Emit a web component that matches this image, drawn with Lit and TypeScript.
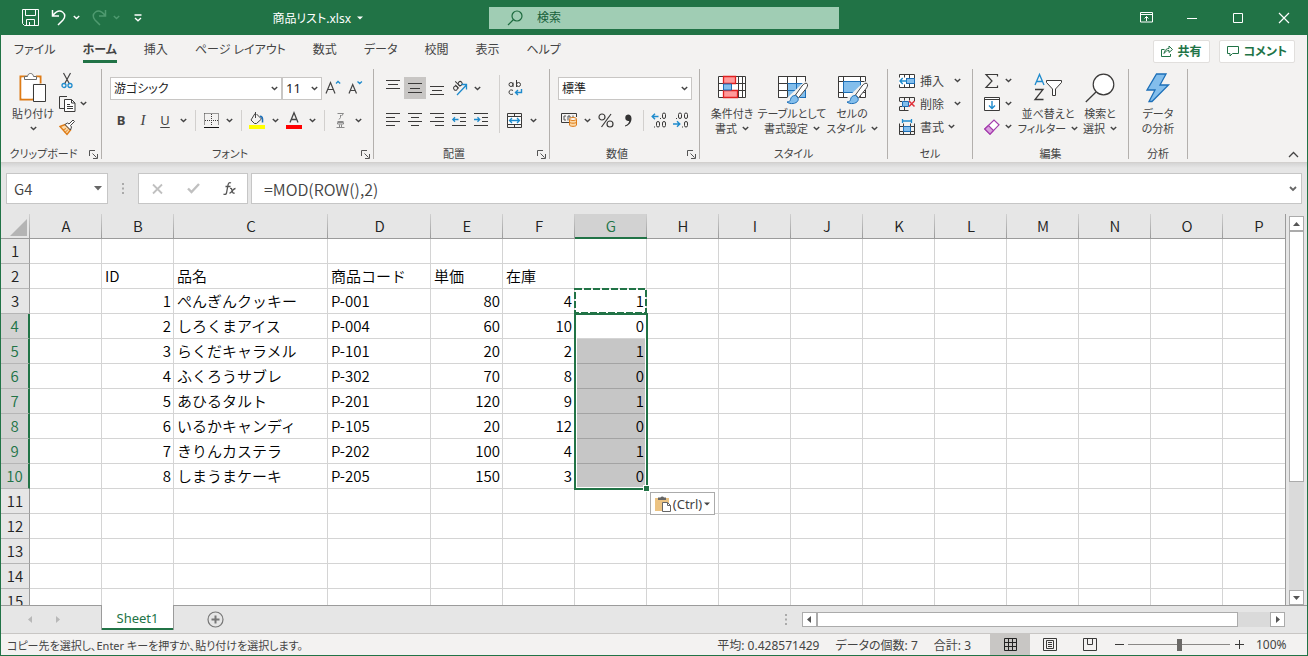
import { LitElement, html, css, svg, nothing, TemplateResult } from "lit";
import { customElement, state } from "lit/decorators.js";
import { classMap } from "lit/directives/class-map.js";

const GREEN = "#217346";
const INK = "#3b3a39";
const BLUE = "#1e8bcd";
const PALE = "#83beec";

const icon = (w: number, h: number, body: unknown) =>
  html`<svg width=${w} height=${h} viewBox="0 0 ${w} ${h}" fill="none" stroke=${INK} aria-hidden="true">${body}</svg>`;

const chevron = html`<svg class="chev" width="7" height="5" viewBox="0 0 7 5" fill="none" stroke="#444" stroke-width="1.4" aria-hidden="true"><path d="M.8 1 3.5 3.6 6.2 1"/></svg>`;

const brush = svg`<path d="M33 8.500c-1-1-3.500.5-5 2.500l-6.500 9 3 2.800 7-8.500c1.800-2 2.800-4.500 1.500-5.800z" fill="#fff" stroke="#444"/>
  <path d="M21.500 20.500c-3-.2-4.500 1.500-5 4-.4 1.600-1.500 2.500-3.500 2.500 3 2.500 9.500 2 11-1.500.6-1.500.3-3-2.500-5z" fill="${PALE}" stroke="#1c6fb8"/>`;

const icons: Record<string, TemplateResult> = {
  save: html`<svg width="17" height="17" viewBox="0 0 17 17" fill="none" stroke="#fff" aria-hidden="true"><path d="M.5.5h16v16H2.500L.5 14.500zM3.500.5v6h10v-6M4.500 16.500v-6h8v6M7.500 16v-3"/></svg>`,
  undo: html`<svg width="16" height="17" viewBox="0 0 16 17" fill="none" stroke="#fff" stroke-width="1.500" aria-hidden="true"><path d="M1.500 1v6h6.500M1.700 6.800C5 2.500 8.500 1 11.500 3c3 2.200 2.800 5.500.5 8l-5 5"/></svg>`,
  redo: html`<svg width="16" height="17" viewBox="0 0 16 17" fill="none" stroke="#4f9a70" stroke-width="1.500" aria-hidden="true"><path d="M14.500 1v6H8M14.300 6.800C11 2.500 7.500 1 4.500 3c-3 2.200-2.800 5.500-.5 8l5 5"/></svg>`,
  more: html`<svg width="8" height="8" viewBox="0 0 8 8" fill="none" stroke="#fff" stroke-width="1.300" aria-hidden="true"><path d="M.5 1h7M1 4l3 2.800L7 4"/></svg>`,
  search: html`<svg width="16" height="16" viewBox="0 0 16 16" fill="none" stroke="#1d6a3f" stroke-width="1.200" aria-hidden="true"><circle cx="10" cy="6" r="5"/><path d="M6.500 9.500 1 15"/></svg>`,
  ribbonMode: html`<svg width="13" height="11" viewBox="0 0 13 11" fill="none" stroke="#fff" aria-hidden="true"><path d="M.5.5h12v9.500H.5zM.5 2.500h12M6.500 9V4.500M4.500 6.500l2-2 2 2"/></svg>`,
  min: html`<svg width="10" height="10" viewBox="0 0 10 10" stroke="#fff" aria-hidden="true"><path d="M0 5.500h10"/></svg>`,
  max: html`<svg width="10" height="10" viewBox="0 0 10 10" fill="none" stroke="#fff" aria-hidden="true"><path d="M.5.5h9v9h-9z"/></svg>`,
  close: html`<svg width="10" height="10" viewBox="0 0 10 10" stroke="#fff" stroke-width="1.200" aria-hidden="true"><path d="M0 0l10 10M10 0 0 10"/></svg>`,
  share: html`<svg width="12" height="12" viewBox="0 0 12 12" fill="none" stroke=${GREEN} aria-hidden="true"><path d="M3.500 4.500h-3v7h9V9M3 8.500C3.500 5 5.500 3.500 8 3.500V1l3.500 3.500L8 7.500V5.500C6 5.500 4.500 6.200 3 8.500z"/></svg>`,
  comment: html`<svg width="12" height="12" viewBox="0 0 12 12" fill="none" stroke=${GREEN} aria-hidden="true"><path d="M.5 1.500h11v7H5.500L3 11V8.500H.5z"/></svg>`,

  paste: icon(28, 31, svg`<path d="M8 4.500H1.500v23h13M17 4.500h4.500v7" stroke="#de7b16" stroke-width="2"/><path d="M2.500 5.500h18v6h-7v15h-11z" fill="#fff" stroke="none"/>
    <path d="M5.500 7.500v-3h3c.3-2 1.300-3 3-3s2.700 1 3 3h3v3z" fill="#fff" stroke="#6b6b6b"/><path d="M14.500 12.500h12v17h-12z" fill="#fff"/>`),
  cut: icon(12, 17, svg`<path d="M2.500 1 8.500 12M9.500 1 3.500 12" stroke="#444" stroke-width="1.200"/><circle cx="3" cy="13.500" r="2" stroke="${BLUE}" stroke-width="1.300"/><circle cx="9" cy="13.500" r="2" stroke="${BLUE}" stroke-width="1.300"/>`),
  copy: icon(17, 16, svg`<path d="M5 12.500H.5V.5h7.500"/><path d="M5.500 3.500h7l3.500 3.500v8.500H5.500z" fill="#fff"/><path d="M12.500 3.500v3.500H16M8 8.500h3M8 10.500h6M8 12.500h6"/>`),
  painter: icon(16, 16, svg`<path d="M1 7.500 6 5.500l5.500 5.500L8 15.500z" fill="#fbd9a8" stroke="#de7b16" stroke-width="1.400"/><path d="M4 11l3-1.500M6 13.500l3-3" stroke="#de7b16"/><path d="M6 5.500 8.500 4l1.500 1 4-4 1.500 1.500-4 4 1 1.500-1 3z" fill="#fff" stroke="#444"/>`),
  grow: icon(16, 16, svg`<path d="M1 13.500 5.500 2.500 10 13.500M2.700 9.500h5.600" stroke="#444" stroke-width="1.200"/><path d="M11 3.500 13 1.500l2.200 2" stroke="${BLUE}" stroke-width="1.300"/>`),
  shrink: icon(15, 16, svg`<path d="M1 13.500 4.700 4.500 8.500 13.500M2.500 10.500h4.500" stroke="#444" stroke-width="1.200"/><path d="M9.500 1.500l2.200 2 2.200-2" stroke="${BLUE}" stroke-width="1.300"/>`),
  borders: icon(15, 15, svg`<path d="M.5.5h14v12M.5.5v12M7.500 1v12M1 7.500h13" stroke-dasharray="1 1"/><path d="M0 14.500h15" stroke="#111"/>`),
  fill: icon(16, 17, svg`<path d="M6 1.500 2 8l3.500 3.500h2l5-4.500L7.500 2M6.500 0v6" stroke="#444"/><path d="M11 4.500c2-.5 3 1.500 2.500 6" stroke="#1c6fb8" stroke-width="1.600"/><path d="M0 13h16v4H0z" fill="#ff0" stroke="none"/>`),
  fontColor: icon(16, 17, svg`<path d="M4 10.500 8 .8l4 9.700M5.500 7.500h5" stroke="#444" stroke-width="1.300"/><path d="M0 13h16v4H0z" fill="#f00" stroke="none"/>`),
  ruby: icon(9, 17, svg`<path d="M1.500 1.500h6L5.500 4M4.500 3v2.500L3 7.500" stroke="#8a8a8a"/><path d="M1.500 9.500h6M1.500 12h6v-1.500h-6zM3.500 12.500v2.500M5.500 12.500v2.500M.5 15.500h8" stroke="#8a8a8a"/>`),

  top: icon(14, 16, svg`<path d="M0 .5h14M2 4.500h10M0 8.500h14"/>`),
  middle: icon(14, 14, svg`<path d="M0 2.500h14M2 7.500h10M0 11.500h14"/>`),
  bottom: icon(14, 16, svg`<path d="M0 6.500h14M2 10.500h10M0 14.500h14"/>`),
  left: icon(14, 14, svg`<path d="M0 .5h14M0 4.500h9M0 8.500h14M0 12.500h9"/>`),
  center: icon(14, 14, svg`<path d="M0 .5h14M3 4.500h8M0 8.500h14M3 12.500h8"/>`),
  right: icon(14, 14, svg`<path d="M0 .5h14M5 4.500h9M0 8.500h14M5 12.500h9"/>`),
  outdent: icon(15, 14, svg`<path d="M0 .5h14M8 4.500h6M8 8.500h6M0 12.500h14"/><path d="M1 6.500h5.500M3 4.300.8 6.500 3 8.700" stroke="${BLUE}" stroke-width="1.300"/>`),
  indent: icon(15, 14, svg`<path d="M0 .5h14M8 4.500h6M8 8.500h6M0 12.500h14"/><path d="M0 6.500h5.500M3.500 4.300l2.200 2.200-2.200 2.200" stroke="${BLUE}" stroke-width="1.300"/>`),
  orient: icon(17, 16, svg`<g transform="rotate(-45 6 6)"><circle cx="3.500" cy="6.500" r="2"/><path d="M5.500 4v5M8 1.500v7"/><circle cx="10" cy="6.500" r="2"/></g><path d="M6 15 15.500 5M10.500 4.500h5v5" stroke="${BLUE}" stroke-width="1.300"/>`),
  wrap: icon(15, 16, svg`<circle cx="3" cy="4.500" r="2"/><path d="M5 2.500v4.500M8.500 0v7"/><circle cx="10.500" cy="4.500" r="2"/><path d="M5 10.500c-1.500-1.200-4-.5-4 1.700S3.500 15 5 14"/><path d="M13.500 9v3.500H7.500M10 10l-2.500 2.500L10 15" stroke="${BLUE}" stroke-width="1.400"/>`),
  merge: icon(16, 15, svg`<path d="M.5.5h14v14H.5zM7.500.5v3M7.500 11.500v3" /><path d="M.5 3.500h14v8H.5z" fill="#fff"/><path d="M2.500 7.500h10M5 5 2.500 7.500 5 10M10 5l2.500 2.500L10 10" stroke="${BLUE}" stroke-width="1.300"/>`),
  currency: icon(17, 14, svg`<path d="M8 9.500H.5v-9h15v3.500"/><path d="M5 3H3v4h2M7 7.500V3h2v2M12 2.500v2" stroke="#555"/><path d="M8.500 6v6c0 1.800 7 1.800 7 0V6" fill="#fbd9a8" stroke="#de7b16"/><ellipse cx="12" cy="6" rx="3.500" ry="1.500" fill="#fff" stroke="#de7b16"/><path d="M8.500 9c0 1.600 7 1.600 7 0" stroke="#de7b16"/>`),
  percent: icon(16, 15, svg`<circle cx="4" cy="4" r="3" stroke-width="1.200"/><circle cx="12" cy="11" r="3" stroke-width="1.200"/><path d="M13 1 3.500 14" stroke-width="1.200"/>`),
  comma: icon(8, 13, svg`<path d="M4 .5a3.300 3.300 0 0 0 0 6.500c.8 0 1-.1 1.300-.3C5 9 3.500 10.500 1 11.500v1C5 11.500 7.500 8.500 7.500 4.500 7.500 2 6 .5 4 .5z" fill="#333" stroke="none"/>`),
  incDec: icon(16, 16, svg`<path d="M1 4.500h6.500M4 1.800 1.200 4.500 4 7.200" stroke="${BLUE}" stroke-width="1.400"/><rect x="11.500" y="1" width="3" height="5.500" rx="1.500"/><rect x="5.500" y="9.500" width="3" height="5.500" rx="1.500"/><rect x="11.500" y="9.500" width="3" height="5.500" rx="1.500"/><path d="M9 6.500h1M3 15h1"/>`),
  decDec: icon(16, 16, svg`<path d="M0 12h6.500M4 9.300l2.800 2.700L4 14.700" stroke="${BLUE}" stroke-width="1.400"/><rect x="5.500" y="1" width="3" height="5.500" rx="1.500"/><rect x="11.500" y="1" width="3" height="5.500" rx="1.500"/><rect x="11.500" y="9.500" width="3" height="5.500" rx="1.500"/><path d="M3 6.500h1M9 15h1"/>`),

  cond: icon(29, 23, svg`<path d="M.5.5h27v21H.5z" fill="#fff"/><path d="M.5 7.500h27M.5 14.500h27M20.500.5v21M24.500.5v21"/><path d="M5.500.5h12v7h-12zM5.500 14.500h14v7h-14z" fill="#ff9a9a" stroke="#e02020" stroke-width="1.300"/><path d="M5.500 8h8v6h-8z" fill="${PALE}" stroke="#1c6fb8"/>`),
  tableFmt: icon(29, 23, svg`<path d="M.5.5h27v21H.5z" fill="#fff"/><path d="M9.500 7.500h18v14h-18z" fill="${PALE}" stroke="none"/><path d="M.5 7.500h27M.5 14.500h27M9.500.5v21M18.500.5v21M.5.5h27v21H.5z"/><path d="M9.500 7.500h18v14h-18M9.500 14.500h18M18.500 7.500v14" stroke="#1c6fb8"/><path d="M27 5 9 22l3 5h5L31 9z" fill="#f3f2f1" stroke="none"/><g transform="translate(-4 -1)">${brush}</g>`),
  cellStyle: icon(29, 23, svg`<path d="M.5.5h27v21H.5z" fill="#fff"/><path d="M.5 5.500h27M.5 16.500h27M5.500.5v21M22.500.5v21"/><path d="M5.500 5.500h17v11h-17z" fill="${PALE}" stroke="#1c6fb8"/><path d="M27 5 9 22l3 5h5L31 9z" fill="#f3f2f1" stroke="none"/><g transform="translate(-4 -1)">${brush}</g>`),
  insert: icon(16, 14, svg`<path d="M.5.5h15v13H.5z" fill="#fff"/><path d="M.5 4.500h15M.5 9.500h15M5.500.5v13M10.500.5v13"/><path d="M7.500 4.500h8v5h-8z" fill="${PALE}" stroke="#1c6fb8"/><path d="M0 3.500h7v7H0z" fill="#fff" stroke="none"/><path d="M1 7h7M3.700 4 1 7l2.700 3" stroke="${BLUE}" stroke-width="1.400"/>`),
  remove: icon(16, 14, svg`<path d="M.5 4V.5h15V4M.5 10v3.500h9M.5 4.500H3M.5 9.500H3M5.500.5v3M10.500.5v3M5.500 10v3.500"/><path d="M3.500 4.500h6v5h-6z" fill="${PALE}" stroke="#1c6fb8"/><path d="M10 4l5.500 5.500M15.500 4 10 9.500" stroke="#e0303a" stroke-width="1.500"/>`),
  format: icon(16, 16, svg`<path d="M.5 4.500v11h15v-11M.5 7.500h15M.5 12.500h15M4.500 4.500v11M11.500 4.500v11"/><path d="M4.500 7.500h7v5h-7z" fill="${PALE}" stroke="#1c6fb8"/><path d="M3.500 0v4M12.500 0v4M4 2h8" stroke="${BLUE}" stroke-width="1.300"/>`),
  sum: icon(14, 16, svg`<path d="M12.500 3.500v-2H1L7 8 1 14.500h11.500v-2" stroke-width="1.200"/>`),
  fillDown: icon(16, 14, svg`<path d="M.5.5h15v13H.5z" fill="#fff"/><path d="M.5 2.500h15"/><path d="M8 4v7.500M5 8.500l3 3 3-3" stroke="${BLUE}" stroke-width="1.400"/>`),
  clear: icon(16, 16, svg`<path d="M.8 10 10 1l5 4.800L6 15.200z" fill="#fff" stroke="#a43cad" stroke-width="1.200"/><path d="M.8 10 4.500 6.500l5 5L6 15.200z" fill="#d9a0dd" stroke="#a43cad" stroke-width="1.200"/>`),
  sort: icon(29, 29, svg`<path d="M1 12 5.500 1.500 10 12M2.500 8.500h6" stroke="${BLUE}" stroke-width="1.300"/><path d="M1 16.500h8L1 26.500h8.500" stroke-width="1.300"/><path d="M12.500 7.500h15v2l-6 6.500v6.500h-3V16l-6-6.500z" fill="#fff"/>`),
  find: icon(31, 30, svg`<circle cx="18.500" cy="11.500" r="10.300" fill="#fff" stroke-width="1.200"/><path d="M11 19 .8 29" stroke-width="1.300"/>`),
  bolt: icon(24, 30, svg`<path d="M10.500 1h9.500l-6 11h8.500L6 28.500h-3L9 17H1z" fill="${PALE}" stroke="#1c6fb8" stroke-width="1.300"/>`),
  launcher: icon(9, 9, svg`<path d="M.5 6V.5H6M3.500 3.500l4 4M8.500 4v4.500H4" stroke="#555"/>`),
};

interface Row { id: number; name: string; code: string; price: number; stock: number; flag: number }

const ROWS: Row[] = [
  { id: 1, name: "ぺんぎんクッキー", code: "P-001", price: 80, stock: 4, flag: 1 },
  { id: 2, name: "しろくまアイス", code: "P-004", price: 60, stock: 10, flag: 0 },
  { id: 3, name: "らくだキャラメル", code: "P-101", price: 20, stock: 2, flag: 1 },
  { id: 4, name: "ふくろうサブレ", code: "P-302", price: 70, stock: 8, flag: 0 },
  { id: 5, name: "あひるタルト", code: "P-201", price: 120, stock: 9, flag: 1 },
  { id: 6, name: "いるかキャンディ", code: "P-105", price: 20, stock: 12, flag: 0 },
  { id: 7, name: "きりんカステラ", code: "P-202", price: 100, stock: 4, flag: 1 },
  { id: 8, name: "しまうまケーキ", code: "P-205", price: 150, stock: 3, flag: 0 },
];

const COLUMNS = [..."ABCDEFGHIJKLMNOP"];

const controls = css`
  :host, * { box-sizing: border-box; }
  svg { display: block; flex: none; overflow: visible; }
  button, input, select {
    font: inherit; color: inherit; background: none; border: 0; padding: 0; margin: 0;
    border-radius: 0; appearance: none; outline: none; min-width: 0;
  }
  button { display: flex; align-items: center; justify-content: center; white-space: nowrap; }
`;

@customElement("title-bar")
class TitleBar extends LitElement {
  static styles = [controls, css`
    :host { display: grid; grid-template-columns: 488px minmax(160px, 350px) 1fr; align-items: center; height: 35px; background: #217346; color: #fff; font-feature-settings: "palt"; }
    .left, .window { display: flex; align-items: center; }
    .left { padding-left: 21px; }
    .left .chev { stroke: #fff; }
    .dim .chev { stroke: #4f9a70; }
    .tool { gap: 6px; height: 28px; }
    .undo { margin-left: 12px; }
    .redo { margin-left: 11px; }
    .more { margin-left: 14px; }
    .file { margin-left: auto; padding-right: 126px; gap: 6px; font-size: 12px; }
    .search { display: flex; align-items: center; height: 22px; gap: 14px; padding-left: 18px; background: #a0cdb4; color: #17603a; }
    .search input { flex: 1; font-size: 12px; }
    .search input::placeholder { color: #17603a; opacity: 1; }
    .window { justify-content: flex-end; }
    .window button { width: 46px; height: 35px; }
  `];
  render() {
    return html`
      <div class="left">
        <button class="tool" aria-label="上書き保存">${icons.save}</button>
        <button class="tool undo" aria-label="元に戻す">${icons.undo}${chevron}</button>
        <button class="tool redo dim" aria-label="やり直し">${icons.redo}${chevron}</button>
        <button class="tool more" aria-label="クイック アクセス">${icons.more}</button>
        <button class="file">商品リスト.xlsx <svg width="6" height="4" viewBox="0 0 6 4" fill="#fff"><path d="M0 .5h6L3 3.500z"/></svg></button>
      </div>
      <label class="search">${icons.search}<input type="text" placeholder="検索" aria-label="検索"></label>
      <div class="window">
        <button aria-label="リボンの表示オプション">${icons.ribbonMode}</button>
        <button aria-label="最小化">${icons.min}</button>
        <button aria-label="最大化">${icons.max}</button>
        <button aria-label="閉じる">${icons.close}</button>
      </div>`;
  }
}

@customElement("excel-ribbon")
class ExcelRibbon extends LitElement {
  static styles = [controls, css`
    :host { display: block; background: #f3f2f1; color: #444; border-bottom: 1px solid #d2d0ce; font-feature-settings: "palt"; }
    .tabs { display: flex; align-items: center; height: 34px; padding: 0 6px 2px 13px; gap: 27px; }
    .tab { color: #444; text-decoration: none; font-size: 12px; line-height: 22px; height: 24px; white-space: nowrap; }
    .tab.on { font-weight: 700; border-bottom: 3px solid #217346; }
    .actions { display: flex; gap: 9px; margin-left: auto; padding-right: 6px; }
    .actions button { gap: 5px; height: 23px; padding: 0 7px; background: #fff; border: 1px solid #e1dfdd; border-radius: 2px; color: #217346; font-weight: 700; font-size: 12px; }
    .groups { display: flex; height: 93px; }
    .group { display: flex; flex-direction: column; flex: none; height: 90px; border-right: 1px solid #b3b0ad; }
    .clip { width: 101px; } .font { width: 272px; } .align { width: 176px; } .num { width: 150px; }
    .style { width: 188px; } .cells { width: 85px; } .edit { width: 156px; } .data { width: 59px; }
    .body { display: flex; flex: 1; }
    .caption { display: flex; justify-content: center; align-items: center; height: 18px; margin-bottom: -4px; font-size: 11px; line-height: 18px; }
    .caption span { flex: 1; text-align: center; }
    .caption button { width: 15px; height: 15px; }
    .rows { display: flex; flex-direction: column; gap: 10px; padding: 8px 0 0 8px; }
    .row { display: flex; align-items: center; height: 22px; }
    .t { height: 22px; width: 22px; font-size: 13px; }
    .drop { width: 15px; height: 22px; }
    .active { background: #c8c6c4; }
    .bar { width: 1px; height: 21px; background: #d2d0ce; margin: 0 4px; }
    .tall { width: 1px; height: 58px; background: #d2d0ce; margin: 6px 0 0 7px; }
    .merge { padding-left: 4px; }
    .combo { display: grid; align-items: center; background: #fff; border: 1px solid #c8c6c4; height: 23px; color: #222; font-size: 12px; }
    .combo select, .combo .chev { grid-area: 1 / 1; }
    .combo select { height: 21px; padding-left: 3px; width: 100%; font-feature-settings: "palt"; }
    .combo .chev { justify-self: end; margin-right: 3px; pointer-events: none; }
    .w-font { width: 172px; } .w-size { width: 40px; font-size: 13px; } .w-num { width: 134px; }
    .big { flex-direction: column; justify-content: flex-start; height: 68px; font-size: 11px; line-height: 15px; width: 60px; }
    .big .pic { display: flex; align-items: center; justify-content: center; height: 37px; }
    .big .line { display: flex; align-items: center; gap: 5px; height: 15px; }
    .small { display: flex; flex-direction: column; }
    .small button { height: 23px; justify-content: flex-start; font-size: 12px; gap: 4px; }
    .small .pic { display: flex; width: 18px; justify-content: center; }
    .cells .small { padding-left: 10px; }
    .wide .chev { margin-left: 6px; }
    .clip .big { width: 48px; margin-left: 8px; }
    .clip .small { margin-left: 1px; }
    .style .body { padding-left: 2px; }
    .edit .small { padding: 0 0 0 10px; width: 47px; }
    .edit .sortbtn { width: 56px; } .edit .findbtn { width: 48px; }
    .b { font-weight: 700; } .i { font-style: italic; font-family: "Liberation Serif", serif; font-size: 15px; } .u { text-decoration: underline; text-underline-offset: 2px; }
    .collapse { margin: auto 7px 3px auto; width: 14px; height: 10px; }
  `];

  private tool(name: string, label: string, cls = "") {
    return html`<button class="t ${cls}" aria-label=${label}>${icons[name]}</button>`;
  }
  private drop(label: string) {
    return html`<button class="drop" aria-label="${label} オプション">${chevron}</button>`;
  }
  private big(name: string, lines: string[], arrow: boolean, cls = "") {
    return html`<button class="big ${cls}"><span class="pic">${icons[name]}</span>
      ${lines.map((l, i) => html`<span class="line">${l}${arrow && i === lines.length - 1 ? chevron : nothing}</span>`)}</button>`;
  }
  private small(name: string, label: string, text: string, arrow: boolean, cls = "") {
    return html`<button class=${cls} aria-label=${label}><span class="pic">${icons[name]}</span>${text}${arrow ? chevron : nothing}</button>`;
  }
  private caption(text: string, launcher = false) {
    return html`<div class="caption"><span>${text}</span>${launcher ? html`<button aria-label="${text}の設定">${icons.launcher}</button>` : nothing}</div>`;
  }

  render() {
    const tabs = ["ファイル", "ホーム", "挿入", "ページ レイアウト", "数式", "データ", "校閲", "表示", "ヘルプ"];
    return html`
      <nav class="tabs">
        ${tabs.map((t) => html`<a href="#" class=${classMap({ tab: true, on: t === "ホーム" })}>${t}</a>`)}
        <div class="actions">
          <button>${icons.share}共有</button>
          <button>${icons.comment}コメント</button>
        </div>
      </nav>
      <div class="groups">
        <section class="group clip">
          <div class="body">
            ${this.big("paste", ["貼り付け", ""], true)}
            <div class="small">
              ${this.small("cut", "切り取り", "", false)}
              ${this.small("copy", "コピー", "", true)}
              ${this.small("painter", "書式のコピー", "", false)}
            </div>
          </div>
          ${this.caption("クリップボード", true)}
        </section>
        <section class="group font">
          <div class="body"><div class="rows">
            <div class="row">
              <label class="combo w-font"><select aria-label="フォント"><option>游ゴシック</option></select>${chevron}</label>
              <label class="combo w-size"><select aria-label="フォント サイズ"><option>11</option></select>${chevron}</label>
              ${this.tool("grow", "拡大")}${this.tool("shrink", "縮小")}
            </div>
            <div class="row">
              <button class="t b">B</button><button class="t i">I</button><button class="t u">U</button>${this.drop("下線")}
              <span class="bar"></span>${this.tool("borders", "罫線")}${this.drop("罫線")}
              <span class="bar"></span>${this.tool("fill", "塗りつぶし")}${this.drop("塗りつぶし")}${this.tool("fontColor", "文字色")}${this.drop("文字色")}
              <span class="bar"></span>${this.tool("ruby", "ふりがな")}${this.drop("ふりがな")}
            </div>
          </div></div>
          ${this.caption("フォント", true)}
        </section>
        <section class="group align">
          <div class="body">
            <div class="rows">
              <div class="row">${this.tool("top", "上揃え")}${this.tool("middle", "上下中央", "active")}${this.tool("bottom", "下揃え")}${this.tool("orient", "方向")}${this.drop("方向")}</div>
              <div class="row">${this.tool("left", "左揃え")}${this.tool("center", "中央")}${this.tool("right", "右揃え")}${this.tool("outdent", "インデント減")}${this.tool("indent", "インデント増")}</div>
            </div>
            <span class="tall"></span>
            <div class="rows merge">
              <div class="row">${this.tool("wrap", "折り返し")}</div>
              <div class="row">${this.tool("merge", "セル結合")}${this.drop("セル結合")}</div>
            </div>
          </div>
          ${this.caption("配置", true)}
        </section>
        <section class="group num">
          <div class="body"><div class="rows">
            <div class="row"><label class="combo w-num"><select aria-label="表示形式"><option>標準</option></select>${chevron}</label></div>
            <div class="row">${this.tool("currency", "通貨")}${this.drop("通貨")}${this.tool("percent", "パーセント")}${this.tool("comma", "桁区切り")}
              <span class="bar"></span>${this.tool("incDec", "小数点以下増")}${this.tool("decDec", "小数点以下減")}</div>
          </div></div>
          ${this.caption("数値", true)}
        </section>
        <section class="group style">
          <div class="body">
            ${this.big("cond", ["条件付き", "書式"], true)}
            ${this.big("tableFmt", ["テーブルとして", "書式設定"], true)}
            ${this.big("cellStyle", ["セルの", "スタイル"], true)}
          </div>
          ${this.caption("スタイル")}
        </section>
        <section class="group cells">
          <div class="body"><div class="small">
            ${this.small("insert", "挿入", "挿入", true, "wide")}
            ${this.small("remove", "削除", "削除", true, "wide")}
            ${this.small("format", "書式", "書式", true)}
          </div></div>
          ${this.caption("セル")}
        </section>
        <section class="group edit">
          <div class="body">
            <div class="small">
              ${this.small("sum", "合計", "", true)}
              ${this.small("fillDown", "フィル", "", true)}
              ${this.small("clear", "クリア", "", true)}
            </div>
            ${this.big("sort", ["並べ替えと", "フィルター"], true, "sortbtn")}
            ${this.big("find", ["検索と", "選択"], true, "findbtn")}
          </div>
          ${this.caption("編集")}
        </section>
        <section class="group data">
          <div class="body">${this.big("bolt", ["データ", "の分析"], false)}</div>
          ${this.caption("分析")}
        </section>
        <button class="collapse" aria-label="リボンを折りたたむ"><svg width="11" height="7" viewBox="0 0 11 7" fill="none" stroke="#444" stroke-width="1.300"><path d="M1 6l4.500-4.500L10 6"/></svg></button>
      </div>`;
  }
}

@customElement("formula-bar")
class FormulaBar extends LitElement {
  static styles = [controls, css`
    :host { display: flex; padding: 10px 5px; height: 51px; color: #444; background: linear-gradient(#d4d4d4, #e6e6e6 5px); }
    .box { display: flex; align-items: center; background: #fff; border: 1px solid #c6c6c6; }
    .name { width: 102px; padding: 0 5px 0 7px; }
    .name input { flex: 1; font-size: 15px; width: 60px; font-weight: 350; }
    .dots { width: 30px; display: flex; align-items: center; justify-content: center; }
    .fx { width: 110px; }
    .fx button { flex: 1; height: 28px; }
    .formula { flex: 1; margin-left: 3px; padding: 0 4px 0 12px; }
    .formula input { flex: 1; font-size: 16px; font-weight: 350; }
  `];
  render() {
    return html`
      <div class="box name"><input aria-label="名前ボックス" .value=${"G4"}><svg width="8" height="5" viewBox="0 0 8 5" fill="#666"><path d="M0 0h8L4 4.500z"/></svg></div>
      <span class="dots"><svg width="2" height="11" viewBox="0 0 2 11" fill="#aaa"><path d="M0 0h2v2H0zM0 4.500h2v2H0zM0 9h2v2H0z"/></svg></span>
      <div class="box fx">
        <button aria-label="キャンセル"><svg width="11" height="10" viewBox="0 0 11 10" stroke="#c0c0c0" stroke-width="1.800"><path d="M1 .5l9 9M10 .5l-9 9"/></svg></button>
        <button aria-label="入力"><svg width="13" height="11" viewBox="0 0 13 11" fill="none" stroke="#c0c0c0" stroke-width="2.400"><path d="M1 5.500l3.500 3.500L12 1"/></svg></button>
        <button aria-label="関数の挿入"><svg width="13" height="13" viewBox="0 0 13 13" fill="none" stroke="#555" stroke-width="1.300"><path d="M8 1C6 0 5.200 1.500 4.800 4L3.500 11c-.4 1.500-1.500 1.800-3 1M2.500 4.500h5M7 6.500c1.500-.5 1.500 0 2.200 2.500.7 2.200 1 2.500 2.500 2M12.500 6.500c-1.500 0-2 1-3.500 2.800-1 1.200-1.500 1.900-2.500 1.700"/></svg></button>
      </div>
      <div class="box formula"><input aria-label="数式バー" .value=${"=MOD(ROW(),2)"}><svg width="8" height="6" viewBox="0 0 8 6" fill="none" stroke="#666" stroke-width="1.800"><path d="M1 1l3 3 3-3"/></svg></div>`;
  }
}

@customElement("sheet-grid")
class SheetGrid extends LitElement {
  @state() private column = "G";
  @state() private first = 4;
  @state() private last = 10;

  static styles = [controls, css`
    :host { display: flex; min-height: 0; flex: 1; background: #e6e6e6; overflow: hidden; }
    .view { flex: 1; min-width: 0; overflow: hidden; border-right: 1px solid #9b9b9b; }
    table { border-collapse: separate; border-spacing: 0; table-layout: fixed; width: 1182px; background: #fff; color: #000; font-size: 15px; line-height: 24px; font-weight: 350; }
    .c-head { width: 29px; } .c-std { width: 72px; } .c-C { width: 154px; } .c-D { width: 103px; }
    th, td { height: 25px; padding: 0 3px; border-right: 1px solid #d4d4d4; border-bottom: 1px solid #d4d4d4; text-align: left; white-space: nowrap; font-weight: 350; }
    thead th { text-align: center; border-right: 0; border-bottom-color: #9b9b9b; background: linear-gradient(#d0d0d0, #9b9b9b) right / 1px 100% no-repeat #e6e6e6; color: #222; }
    tbody th { text-align: center; padding: 0; background: #e6e6e6; border-right-color: #9b9b9b; border-bottom-color: #b5b5b5; color: #222; }
    thead th.on { background-color: #d2d2d2; color: #217346; border-bottom: 2px solid #217346; line-height: 23px; }
    tbody th.on { background: #d2d2d2; color: #217346; border-right: 2px solid #217346; }
    .corner svg { margin: 3px 0 0 auto; }
    .n { text-align: right; padding-right: 2px; }
    .over { position: relative; }
    .sel { background: #c6c6c6; border-bottom-color: #a3a3a3; }
    .march { position: absolute; left: -1px; top: -1px; width: 73px; height: 26px; z-index: 1; }
    .range { position: absolute; left: -1px; top: -1px; width: 74px; border: 2px solid #217346; outline: 1px solid #fff; outline-offset: -3px; z-index: 2; }
    .handle { position: absolute; right: -4px; bottom: -4px; width: 7px; height: 7px; background: #217346; border: 1px solid #fff; }
    .paste { position: absolute; left: 3px; top: 3px; width: 65px; height: 23px; z-index: 3; gap: 2px; background: #fff; border: 1px solid #ababab; color: #444; font-size: 13px; font-weight: 400; font-family: "Noto Sans", sans-serif; }
    .vbar { display: flex; flex-direction: column; width: 21px; padding: 2px 3px 0; }
    .vbar button { width: 15px; height: 15px; background: #fff; border: 1px solid #ababab; }
    .track { flex: 1; width: 15px; background: #dadada; }
    .thumb { height: 70%; width: 15px; background: #fff; border: 1px solid #ababab; }
  `];

  private width(c: string) { return c === "C" || c === "D" ? `c-${c}` : "c-std"; }

  private content(col: string, row: number): string | number {
    if (row === 2) return ({ B: "ID", C: "品名", D: "商品コード", E: "単価", F: "在庫" } as Record<string, string>)[col] ?? "";
    const r = ROWS[row - 3];
    if (!r) return "";
    return ({ B: r.id, C: r.name, D: r.code, E: r.price, F: r.stock, G: r.flag } as Record<string, string | number>)[col] ?? "";
  }

  private overlay(col: string, row: number) {
    if (col === this.column && row === this.first - 1)
      return html`<svg class="march" viewBox="0 0 73 26" fill="none" stroke=${GREEN} stroke-width="2" stroke-dasharray="7 2"><path d="M1 1h71v24H1z"/></svg>`;
    if (col === this.column && row === this.first)
      return html`<div class="range" style="height:${(this.last - this.first + 1) * 25 + 2}px"><span class="handle"></span></div>`;
    if (col === "H" && row === this.last + 1)
      return html`<button class="paste"><svg width="16" height="17" viewBox="0 0 16 17"><path d="M0 3h14v13H0z" fill="#ecc382"/><path d="M3 5V2.500h2.500a2 2 0 0 1 3.500 0H11V5z" fill="#666"/><path d="M7.500 7.500h5l3 3v6h-8z" fill="#fff" stroke="#666"/><path d="M12.500 7.500v3h3" fill="none" stroke="#666"/></svg>(Ctrl)<svg width="6" height="4" viewBox="0 0 6 4" fill="#444"><path d="M0 .5h6L3 3.500z"/></svg></button>`;
    return nothing;
  }

  private cell(col: string, row: number) {
    const v = this.content(col, row);
    const o = this.overlay(col, row);
    const sel = col === this.column && row > this.first && row <= this.last;
    return html`<td class=${classMap({ n: typeof v === "number", sel, over: o !== nothing })}>${v}${o}</td>`;
  }

  render() {
    const rows = Array.from({ length: 15 }, (_, i) => i + 1);
    return html`
      <div class="view"><table>
        <colgroup><col class="c-head">${COLUMNS.map((c) => html`<col class=${this.width(c)}>`)}</colgroup>
        <thead><tr><th class="corner"><svg width="17" height="17" viewBox="0 0 17 17" fill="#b4b4b4"><path d="M17 0v17H0z"/></svg></th>
          ${COLUMNS.map((c) => html`<th class=${classMap({ on: c === this.column })}>${c}</th>`)}</tr></thead>
        <tbody>${rows.map((r) => html`<tr><th class=${classMap({ on: r >= this.first && r <= this.last })}>${r}</th>${COLUMNS.map((c) => this.cell(c, r))}</tr>`)}</tbody>
      </table></div>
      <div class="vbar">
        <button aria-label="上へ"><svg width="7" height="4" viewBox="0 0 7 4" fill="#555"><path d="M0 4h7L3.500 0z"/></svg></button>
        <div class="track"><div class="thumb"></div></div>
        <button aria-label="下へ"><svg width="7" height="4" viewBox="0 0 7 4" fill="#555"><path d="M0 0h7L3.500 4z"/></svg></button>
      </div>`;
  }
}

@customElement("sheet-tabs")
class SheetTabs extends LitElement {
  static styles = [controls, css`
    :host { display: flex; height: 28px; background: #e6e6e6; border-top: 1px solid #9b9b9b; }
    .nav { display: flex; align-items: center; width: 100px; padding-left: 27px; gap: 24px; }
    .tab { width: 73px; height: 25px; margin-top: -1px; background: #fff; border: solid #9b9b9b; border-width: 0 1px; box-shadow: inset 0 -2px #217346; color: #217346; font-size: 13px; }
    .add { margin-left: 33px; }
    .dots { margin: auto 15px auto auto; }
    .hbar { display: flex; align-items: center; width: 37%; margin-right: 22px; height: 27px; }
    .hbar button { width: 15px; height: 15px; background: #fff; border: 1px solid #ababab; }
    .thumb { flex: 13; height: 15px; background: #fff; border: 1px solid #ababab; }
    .track { flex: 1; height: 15px; background: #dadada; }
  `];
  render() {
    const left = (c: string) => html`<svg width="4" height="7" viewBox="0 0 4 7" fill=${c}><path d="M4 0v7L0 3.500z"/></svg>`;
    const right = (c: string) => html`<svg width="4" height="7" viewBox="0 0 4 7" fill=${c}><path d="M0 0v7l4-3.500z"/></svg>`;
    return html`
      <div class="nav"><button aria-label="前のシート">${left("#b8b8b8")}</button><button aria-label="次のシート">${right("#b8b8b8")}</button></div>
      <button class="tab">Sheet1</button>
      <button class="add" aria-label="新しいシート"><svg width="17" height="17" viewBox="0 0 17 17" fill="none" stroke="#777"><circle cx="8.500" cy="8.500" r="7.500" stroke-width="1.200"/><path d="M4.500 8.500h8M8.500 4.500v8" stroke-width="2"/></svg></button>
      <svg class="dots" width="2" height="11" viewBox="0 0 2 11" fill="#aaa"><path d="M0 0h2v2H0zM0 4.500h2v2H0zM0 9h2v2H0z"/></svg>
      <div class="hbar"><button aria-label="左へ">${left("#555")}</button><div class="thumb"></div><div class="track"></div><button aria-label="右へ">${right("#555")}</button></div>`;
  }
}

@customElement("status-bar")
class StatusBar extends LitElement {
  static styles = [controls, css`
    :host { display: flex; align-items: center; height: 22px; background: #f3f2f1; border-top: 1px solid #c8c6c4; color: #444; font-size: 12px; white-space: nowrap; font-feature-settings: "palt"; }
    .msg { margin-left: 6px; font-size: 11px; }
    .stats { display: flex; gap: 16px; margin-left: auto; margin-right: 19px; }
    .v { width: 40px; height: 21px; }
    .v.on { background: #c8c6c4; }
    .sign { width: 18px; height: 20px; }
    .zoom { width: 102px; height: 12px; background: linear-gradient(#8a8886, #8a8886) center / 100% 1px no-repeat; }
    .zoom::-webkit-slider-thumb { appearance: none; width: 5px; height: 12px; background: #6b6967; }
    .pct { width: 59px; text-align: left; padding-left: 8px; }
  `];
  render() {
    return html`
      <span class="msg">コピー先を選択し、Enter キーを押すか、貼り付けを選択します。</span>
      <div class="stats"><span>平均: 0.428571429</span><span>データの個数: 7</span><span>合計: 3</span></div>
      <button class="v on" aria-label="標準">${icon(13, 13, svg`<path d="M.5.5h12v12H.5zM4.500.5v12M8.500.5v12M.5 4.500h12M.5 8.500h12" stroke="#222"/>`)}</button>
      <button class="v" aria-label="ページ レイアウト">${icon(14, 13, svg`<path d="M.5.5h13v12H.5zM3.500 2.500h7v8h-7zM5 4.500h4M5 6.500h4M5 8.500h4"/>`)}</button>
      <button class="v" aria-label="改ページ プレビュー">${icon(14, 13, svg`<path d="M.5.5h13v12H.5zM4.500.5v6M9.500.5v6M4.500 6.500h5"/>`)}</button>
      <button class="sign" aria-label="縮小">${icon(9, 9, svg`<path d="M0 4.500h9"/>`)}</button>
      <input class="zoom" type="range" min="0" max="200" value="100" aria-label="ズーム">
      <button class="sign" aria-label="拡大">${icon(9, 9, svg`<path d="M0 4.500h9M4.500 0v9"/>`)}</button>
      <span class="pct">100%</span>`;
  }
}

@customElement("app-root")
class AppRoot extends LitElement {
  static styles = css`
    :host { display: flex; flex-direction: column; box-sizing: border-box; height: 100vh; overflow: hidden; border: solid #217346; border-width: 0 1px 1px; font-family: "Noto Sans", "Noto Sans CJK JP", sans-serif; font-size: 12px; }
    .sheet { font-family: "Noto Sans CJK JP", sans-serif; }
  `;
  render() {
    return html`
      <title-bar></title-bar>
      <excel-ribbon></excel-ribbon>
      <formula-bar class="sheet"></formula-bar>
      <sheet-grid class="sheet"></sheet-grid>
      <sheet-tabs></sheet-tabs>
      <status-bar></status-bar>`;
  }
}
